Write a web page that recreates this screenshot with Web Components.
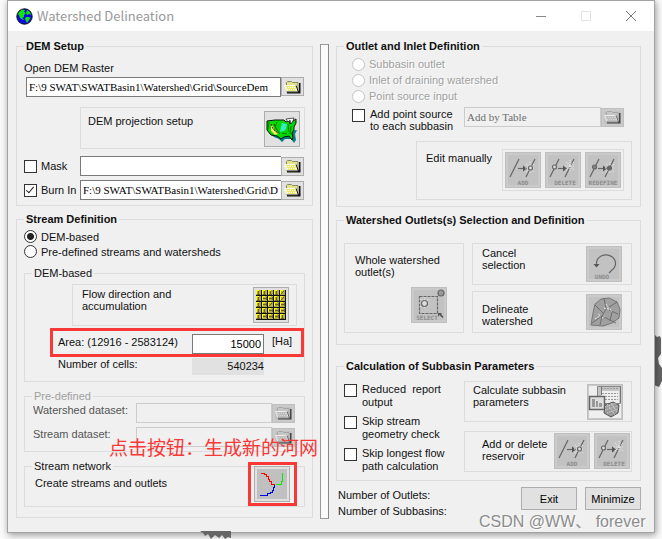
<!DOCTYPE html>
<html lang="en">
<head>
<meta charset="utf-8">
<title>Watershed Delineation</title>
<style>
  html { background: #f9faf9; }
  body { margin: 0; position: relative; font: 11px/12px "Liberation Sans", "Noto Sans CJK SC", sans-serif; color: #111; overflow: hidden; }
</style>
</head>
<body>
<watershed-app></watershed-app>

<script>
const define = (name, html, setup) => customElements.define(name, class extends HTMLElement {
  connectedCallback() {
    if (this.shadowRoot) return;
    const root = this.attachShadow({ mode: "open" });
    const t = document.createElement("template");
    t.innerHTML = typeof html === "function" ? html(this) : html;
    root.append(t.content.cloneNode(true));
    if (setup) setup(this, root);
  }
});

const channel = (body, label, x) => `<g fill="none" stroke="#666" stroke-width="1.2">${body}</g>
  <text x="${x}" y="33" font-family="DejaVu Sans Mono, monospace" font-weight="bold" font-size="6" fill="#8c8c8c" text-anchor="middle">${label}</text>`;
const sparkle = (x, y) => `<path stroke="#e4e4e4" stroke-dasharray="1 1" d="M${x - 4} ${y - 4}l8 8M${x - 4} ${y + 4}l8-8M${x} ${y - 6}v12M${x - 5} ${y}h10"/>`;
const arrow = `<path d="M13 16.5h7"/><path fill="#555" stroke="none" d="M18 13.500l4 3l-4 3z"/>`;

const ICONS = {
  folder: `<svg width="17" height="14" viewBox="0 0 17 14"><path fill="#111" d="M15 3h1.500v10.500H3V12h12z"/><path fill="var(--a)" stroke="var(--b)" d="M2.500 11.500v-9l1-1h4l1 1h5.500v9.500H2.500z"/><path fill="var(--c)" stroke="#fff" d="M.5 5.500h11l2 6H3z"/><path stroke="var(--d)" stroke-dasharray="1 1" d="M2 7.500h10M3 9.500h10"/><path stroke="var(--e)" fill="none" d="M12 5.500l2.500 6.500H3"/></svg>`,
  usa: `<svg width="32" height="28" viewBox="0 0 32 28"><path fill="#067f80" d="M3 18l5 4 5 2 3 3 3-3h6l3 4 2-3-1-6 2-4z"/><path fill="#00d900" stroke="#111" d="M1 6l8-1h9l2 2 3-1 1 3 3-3 3-2v4l-2 4v3l-2 3 1 5-1 2-3-4-5 1-3 2-4-3-6-1-4-5L1 14z"/><path fill="#39e8c8" d="M16 8l5 1-1 5-2 2-4 1 1-5z"/><path fill="#ffe26a" d="M5 10l2 1 1 4 4 4-3 1-4-4z"/><path fill="none" stroke="#7a1010" stroke-dasharray="2 1" d="M5 9l2 5 5 4M8 9l3 6"/><path fill="none" stroke="#0a7a0a" d="M3 7l-1 7M11 7l-2 5 5 7M22 9l1 8M25 11l-1 8M16 18l5 1"/><path fill="#fff" stroke="#111" stroke-width=".7" d="M20 4l2 3 2-2 1 4 2-3 1-3z"/></svg>`,
  flow: (() => {
    let s = `<svg width="30" height="30" viewBox="0 0 30 30" shape-rendering="crispEdges"><path fill="#b5ae48" d="M0 0h30v30H0z"/>`;
    for (let y = 0; y < 5; y++) for (let x = 0; x < 5; x++) {
      const X = x * 6, Y = y * 6, down = y === 0 || x === 0 || (x + y) % 4 === 0, diag = x === 4 && y < 2 || x === 2 && y === 2;
      s += `<path fill="#ff0" d="M${X} ${Y}h3v1h-2v3h-1z"/><path fill="none" stroke="#6b5f2a" d="${diag ? `M${X + 4} ${Y + 1}l-3 3` : down ? `M${X + 2.5} ${Y + 1}v4m-1.500-1h3` : `M${X + 1} ${Y + 2.5}h4m-1-1.500v3`}"/>`;
    }
    return s + `<path stroke="#111" d="M5.500 0v30M11.500 0v30M17.500 0v30M23.500 0v30M29.500 0v30M0 5.500h30M0 11.500h30M0 17.500h30M0 23.500h30M0 29.500h30"/></svg>`;
  })(),
  streams: `<svg width="30" height="30" viewBox="0 0 30 30"><path fill="#c0c0c0" d="M0 0h30v30H0z"/><g fill="none" stroke-width="1" shape-rendering="crispEdges"><path stroke="red" d="M4 4.500h3.500v1h2v2h2v3h1v2h2v3h3"/><path stroke="#0e0" d="M25.500 4v8h-1v3h-2v.5h-4"/><path stroke="#0000e0" d="M17.500 16v2h-1.500v3h-1v2h-2v1h-3v2.500H3"/></g></svg>`,
  add: `<svg width="36" height="36" viewBox="0 0 36 36">${channel(`<path d="M5 25L14 7M21 25l9-18"/>${arrow}${sparkle(25, 16)}<circle cx="25.500" cy="16" r="2" fill="#ddd"/>`, "ADD", 18)}</svg>`,
  delete: `<svg width="36" height="36" viewBox="0 0 36 36">${channel(`<path d="M5 25L14 7M20 25l9-18"/><circle cx="9.500" cy="15" r="2" fill="#ddd"/>${arrow}${sparkle(25, 14)}`, "DELETE", 20)}</svg>`,
  redefine: `<svg width="36" height="36" viewBox="0 0 36 36">${channel(`<path d="M5 25L14 7M20 25l9-18"/><circle cx="9.500" cy="15" r="2" fill="#888"/>${arrow}${sparkle(25, 16)}<circle cx="24.500" cy="16" r="2" fill="#666"/>`, "REDEFINE", 18)}</svg>`,
  select: `<svg width="36" height="36" viewBox="0 0 36 36">${channel(`<path stroke-dasharray="3 1" d="M8.500 9.500h18v17h-18z"/>${sparkle(13.5, 16)}<circle cx="13.500" cy="16.500" r="3" fill="#ddd"/><circle cx="30" cy="6" r="3" fill="#999"/><path fill="#555" stroke="none" d="M27 26h4l-1 1 2.500 3-1 1-3-3-1.500 1.500z"/>`, "SELECT", 16)}</svg>`,
  undo: `<svg width="36" height="36" viewBox="0 0 36 36">${channel(`<path d="M10.500 19v-2A9.500 8.500 0 1 1 26 24l-3 3"/><path fill="#555" stroke="none" d="M7.500 18h6l-3 3.500z"/>`, "UNDO", 16)}</svg>`,
  leaf: `<svg width="36" height="36" viewBox="0 0 36 36"><path fill="#a0a0a0" stroke="#777" d="M5 31l2-12 2-9 6-5 8-1 8 4 3 7-1 9-7 5-9 3z"/><path fill="none" stroke="#6e6e6e" d="M6 29l10-7 4-7-2-11M16 22l14 7M18 20l-9-9M20 15l11-7M23 16l9 4M16 22l-2 9M26 18l-2 9"/><path stroke="#eee" fill="none" stroke-dasharray="2 1" d="M9 25l5-3-2-3m4 5l3-2m-1-8l5 1-3-5m4 5l2 3"/></svg>`,
  report: `<svg width="36" height="34" viewBox="0 0 36 34"><path fill="#efefef" d="M2 1h32v32H2z"/><path fill="#c5c5c5" stroke="#888" d="M10.500 1.500h23v17h-23z"/><path fill="#eee" d="M14 6h18v12H14z"/><path stroke="#999" stroke-dasharray="2 1" d="M14 3.500h18M15 8.500h16M15 11.500h16M15 14.500h16"/><path stroke="#777" d="M33.500 1v17M14.500 1v9"/><path fill="#ddd" stroke="#666" stroke-width="1.500" d="M2.500 11.500h15v13h-15z"/><path fill="#999" d="M5 14h3v8H5zM9 16h2v6H9zM12 18h3v4h-3z"/><path fill="#999" stroke="#555" d="M18 20l8-3 6 3-1 8-7 4-7-4z"/><path fill="none" stroke="#ddd" stroke-dasharray="1 1" d="M18 22l12-4M18 25l13-4M20 28l11-4M20 19l8 11M24 18l6 9"/></svg>`,
  globe: `<svg width="17" height="17" viewBox="0 0 17 17"><circle cx="8.500" cy="8.500" r="7.700" fill="#0808e8" stroke="#111"/><path fill="#0ee60e" d="M3 4l3-2.500 3 .5-1 2 2 1-2 2v2l-2 1 2 1.500-1 .5-3-2-1-3-1-.500zM11 2l3 2 1 3-2-1-2 1-1-2zM10 9h3l1.500 1-1.500 2-2 3-1-2-1-2z"/></svg>`
};

define("tool-button", el => `
<style>
  :host { display: block; flex: none; }
  button { display: grid; place-items: center; width: 36px; height: 36px; margin: 0; padding: 0; border: 0; box-shadow: inset 0 0 0 1px #adadad; background: #e1e1e1; overflow: hidden; }
  button:disabled { box-shadow: inset 0 0 0 1px #bfbfbf, inset 0 0 0 3px #cacaca; background: #c2c2c2; }
  :host([icon=folder]) button { width: 23px; height: 19px; --a: #e6e28a; --b: #8a8a60; --c: #efeb6a; --d: #fff; --e: #111; }
  :host([icon=folder]) button:disabled { --a: #c8c8c8; --b: #999; --c: #bbb; --d: #ddd; --e: #444; }
  :host([icon=folder]) button:disabled svg { opacity: .7; }
  svg { display: block; }
</style>
<button type="button" aria-label="${el.getAttribute("label")}" ${el.hasAttribute("disabled") ? "disabled" : ""}>${ICONS[el.getAttribute("icon")]}</button>`);

define("group-box", `
<style>
  :host { display: block; }
  fieldset { box-sizing: border-box; min-width: 0; height: 100%; margin: 0; padding: 0 7px; border: 1px solid #dcdcdc; }
  legend { padding: 0 2px; height: 14px; line-height: 14px; font-weight: bold; }
  :host([sub]) legend { font-weight: normal; }
  :host([off]) legend { color: #a0a0a0; }
</style>
<fieldset><legend><slot name="legend"></slot></legend><slot></slot></fieldset>`);

define("action-panel", `
<style>
  :host { display: flex; box-sizing: border-box; border: 1px solid #dcdcdc; justify-content: space-between; align-items: flex-start; }
</style>
<slot></slot>`);

define("path-field", el => {
  const kind = el.getAttribute("kind"), a = n => el.getAttribute(n) || "";
  const off = el.hasAttribute("disabled") ? "disabled" : "";
  const text = `<label for="f">${a("label")}</label>`;
  return `
<style>
  :host { display: flex; align-items: center; height: 20px; }
  :host([kind=above]) { display: block; height: auto; }
  .row { display: flex; flex: 1; min-width: 0; height: 20px; align-items: center; padding-right: 1px; }
  :host([kind=above]) .row { padding-left: 2px; margin-top: 2px; }
  :host([kind=above]) tool-button { align-self: flex-start; }
  .name { display: flex; align-items: center; gap: 4px; width: var(--name, 56px); flex: none; white-space: nowrap; overflow: hidden; }
  :host([disabled]) .name { color: #555; padding-bottom: 6px; }
  :host([kind=above]) .name { width: auto; height: 14px; }
  .name input { appearance: none; box-sizing: border-box; width: 13px; height: 13px; margin: 0; border: 1px solid #333; background: #fff; flex: none; position: relative; }
  .name input:checked::after { content: ""; position: absolute; left: 3px; top: 0; width: 3px; height: 7px; border: solid #222; border-width: 0 1px 1px 0; rotate: 40deg; }
  .path { flex: 1; min-width: 0; width: 0; box-sizing: border-box; height: 20px; margin: 0; padding: 0 2px; border: 1px solid #7a7a7a; background: #fff; color: #000; font: 11px "Liberation Serif", serif; }
  .path:disabled { border: 1px solid #ccc; background: #f0f0f0; color: #6d6d6d; }
  :host([kind=check]) .path { border-right: 0; padding-right: 0; }
</style>
${kind === "above" ? `<div class="name">${text}</div>` : kind === "check" ? `<div class="name"><input type="checkbox" id="c" ${el.hasAttribute("checked") ? "checked" : ""}><label for="c">${a("label")}</label></div>` : kind === "bare" ? "" : `<div class="name">${text}</div>`}
<div class="row"><input class="path" id="f" type="text" aria-label="${a("label")}" value="${a("value")}" ${off}><tool-button icon="folder" label="Browse ${a("label")}" ${off}></tool-button></div>`;
});

define("radio-list", el => `
<style>
  :host { display: grid; grid-auto-rows: var(--step, 15px); }
  label { display: flex; align-items: center; gap: 4px; }
  input { appearance: none; box-sizing: border-box; width: 13px; height: 13px; margin: 0; border: 1px solid #333; border-radius: 50%; background: #fff; flex: none; }
  input:checked { background: radial-gradient(circle, #222 0 3px, #fff 4px); }
  input:disabled { border-color: #c4c4c4; }
  input:disabled + span { color: #a0a0a0; text-shadow: 1px 1px #fff; }
</style>
${el.getAttribute("options").split("|").map((o, i) => `<label><input type="radio" name="r" ${el.hasAttribute("disabled") ? "disabled" : i ? "" : "checked"}><span>${o}</span></label>`).join("")}`);

define("check-option", `
<style>
  :host { display: block; }
  label { display: flex; gap: 5px; }
  input { appearance: none; box-sizing: border-box; width: 13px; height: 13px; margin: 1px 0 0; border: 1px solid #333; background: #fff; flex: none; }
  input:checked { background: #333; }
  span { white-space: nowrap; }
</style>
<label><input type="checkbox"><span><slot></slot></span></label>`);

define("title-bar", `
<style>
  :host { display: flex; align-items: center; height: 30px; padding: 0 8px; background: #fff; }
  h1 { flex: 1; margin: 0 0 0 4px; font: 400 13px/20px "Noto Sans CJK SC", sans-serif; color: #999; }
  button { width: 45px; height: 28px; padding: 0; border: 0; background: none; display: grid; place-items: center; }
  button:last-child { width: 30px; margin-left: 8px; }
</style>
${ICONS.globe}<h1><slot></slot></h1>
<button type="button" aria-label="Minimize window"><svg width="12" height="12"><path stroke="#888" d="M1 6.500h10"/></svg></button>
<button type="button" aria-label="Maximize window" disabled><svg width="12" height="12"><path fill="none" stroke="#e2e2e2" d="M1.500 1.500h9v9h-9z"/></svg></button>
<button type="button" aria-label="Close window"><svg width="12" height="12"><path stroke="#777" d="M1 1l10 10M11 1L1 11"/></svg></button>`);

define("stream-panel", `
<style>
  :host { display: block; padding: 3px 0 10px; }
  .base { margin-top: 7px; }
  action-panel { height: 42px; margin: 4px 0 0 40px; padding: 2px 7px 0 9px; }
  .fields { position: relative; display: grid; grid-template-columns: 134px 72px 1fr; padding: 8px 0 6px 26px; row-gap: 4px; }
  .mark { position: absolute; left: 18px; right: -7px; top: 2px; height: 29px; box-sizing: border-box; border: 3px solid #f93838; pointer-events: none; }
  .fields > label { line-height: 17px; }
  .fields > .cells { line-height: 12px; }
  input, output { box-sizing: border-box; width: 100%; margin: 0; text-align: right; font: 11px "Liberation Sans", sans-serif; }
  input { height: 20px; border: 1px solid #7a7a7a; padding: 0 2px; background: #fff; }
  output { height: 17px; line-height: 17px; background: #e1e1e1; }
  .unit { padding: 1px 0 0 8px; }
  .flow { padding-top: 1px; }
  .pre { margin-top: 7px; }
  .pre path-field { --name: 103px; padding-left: 1px; padding-right: 1px; }
  .pre path-field + path-field { margin: 4px 0; }
  .net { margin-top: 7px; }
  .create { display: flex; justify-content: space-between; padding: 0 7px 4px 3px; }
  .create span { padding-top: 4px; }
  .hit { position: relative; margin-top: -7px; }
  .hit i { position: absolute; inset: -4px -7px -4px -6px; border: 3px solid #f93838; pointer-events: none; }
  .note { position: absolute; left: 101px; top: 434px; font: 19px/24px "Noto Sans CJK SC", sans-serif; color: #f93838; white-space: nowrap; }
</style>
<radio-list options="DEM-based|Pre-defined streams and watersheds"></radio-list>
<group-box sub class="base"><span slot="legend">DEM-based</span>
  <action-panel><span class="flow">Flow direction and<br>accumulation</span><tool-button icon="flow" label="Flow direction and accumulation"></tool-button></action-panel>
  <div class="fields">
    <label for="area">Area: (12916 - 2583124)</label><input id="area" type="text" value="15000"><span class="unit">[Ha]</span>
    <label for="cells" class="cells">Number of cells:</label><output id="cells">540234</output>
    <div class="mark"></div>
  </div>
</group-box>
<group-box sub off class="pre"><span slot="legend">Pre-defined</span>
  <path-field kind="left" label="Watershed dataset:" disabled></path-field>
  <path-field kind="left" label="Stream dataset:" disabled></path-field>
</group-box>
<group-box sub class="net"><span slot="legend">Stream network</span>
  <div class="create"><span>Create streams and outlets</span><div class="hit"><tool-button icon="streams" label="Create streams and outlets"></tool-button><i></i></div></div>
</group-box>
<div class="note">点击按钮：生成新的河网</div>`);

define("outlet-panel", `
<style>
  :host { display: block; padding: 3px 1px 6px 8px; }
  radio-list { --step: 16px; }
  .source { display: grid; grid-template-columns: 112px 1fr; padding-right: 7px; margin-top: 3px; }
  check-option { padding-top: 1px; }
  .edit { height: 59px; margin: 9px 0 0 64px; padding: 7px; }
  .edit > span { padding: 3px 0 0 2px; white-space: nowrap; }
  .tools { padding: 2px; gap: 4px; border: 1px solid #dcdcdc; display: flex; }
</style>
<radio-list disabled options="Subbasin outlet|Inlet of draining watershed|Point source input"></radio-list>
<div class="source"><check-option>Add point source<br>to each subbasin</check-option><path-field kind="bare" label="Point source table" value="Add by Table" disabled></path-field></div>
<action-panel class="edit"><span>Edit manually</span><div class="tools"><tool-button icon="add" label="Add" disabled></tool-button><tool-button icon="delete" label="Delete" disabled></tool-button><tool-button icon="redefine" label="Redefine" disabled></tool-button></div></action-panel>`);

define("selection-panel", `
<style>
  :host { display: grid; grid-template-columns: 3fr 4fr; grid-template-rows: 42px 42px; gap: 6px 8px; padding: 16px 1px 11px 0; }
  action-panel { padding: 2px 9px 0; }
  .whole { grid-row: 1 / 3; flex-direction: column; padding: 10px 16px 9px 10px; }
  .whole tool-button { align-self: flex-end; }
  .sel span { padding-top: 1px; } .del span { padding-top: 9px; }
</style>
<action-panel class="whole"><span>Whole watershed<br>outlet(s)</span><tool-button icon="select" label="Select whole watershed outlets" disabled></tool-button></action-panel>
<action-panel class="sel"><span>Cancel<br>selection</span><tool-button icon="undo" label="Undo" disabled></tool-button></action-panel>
<action-panel class="del"><span>Delineate<br>watershed</span><tool-button icon="leaf" label="Delineate watershed" disabled></tool-button></action-panel>`);

define("calc-panel", `
<style>
  :host { display: grid; grid-template-columns: 120px 1fr; padding: 8px 1px 1px 0; align-items: start; }
  .checks { display: grid; grid-auto-rows: 32px; line-height: 13px; padding-top: 2px; }
  .tasks { display: grid; gap: 9px; }
  action-panel { height: 41px; padding: 2px 8px 0; }
  .res { padding: 1px 1px 0 17px; }
  .res > span { padding-top: 5px; white-space: nowrap; }
  .pair { display: flex; gap: 4px; }
</style>
<div class="checks"><check-option>Reduced&nbsp; report<br>output</check-option><check-option>Skip stream<br>geometry check</check-option><check-option>Skip longest flow<br>path calculation</check-option></div>
<div class="tasks">
  <action-panel><span>Calculate subbasin<br>parameters</span><tool-button icon="report" label="Calculate subbasin parameters" disabled></tool-button></action-panel>
  <action-panel class="res"><span>Add or delete<br>reservoir</span><div class="pair"><tool-button icon="add" label="Add reservoir" disabled></tool-button><tool-button icon="delete" label="Delete reservoir" disabled></tool-button></div></action-panel>
</div>`);

define("watershed-app", `
<style>
  :host { display: block; position: relative; padding: 0 7px 7px; }
  .window { border: 1px solid #a3a3a3; background: #f0f0f0; position: relative; box-shadow: 1px 2px 7px #0006; }
  .map { position: absolute; fill: #666; }
  .map.right { right: 0; top: 334px; } .map.foot { left: 200px; top: 531px; }
  main { display: grid; grid-template-columns: 297fr 9px 305fr; column-gap: 7px; padding: 8px 13px 13px 8px; }
  .bar { border: 1px solid #999; border-right-color: #888; background: #fafafa; margin-top: 5px; }
  .dem { padding: 8px 0 5px; }
  .proj { height: 42px; margin: 10px 0 7px 56px; padding: 3px 4px 0 7px; }
  .proj span { padding-top: 4px; }
  .burn { margin-top: 4px; }
  .left, .right { min-width: 0; }
  .second { margin-top: 6px; } .third { margin-top: 14px; }
  footer { display: flex; gap: 8px; margin-top: 6px; padding-left: 2px; align-items: flex-start; }
  footer p { flex: 1; margin: 0; line-height: 16px; }
  footer button { width: 56px; height: 23px; padding: 0; border: 1px solid #adadad; background: #e1e1e1; font: 11px "Liberation Sans", sans-serif; }
  .credit { position: absolute; left: 479px; top: 512px; font: 16px/20px "Liberation Sans", "Noto Sans CJK SC", sans-serif; color: #8c8c8c; white-space: nowrap; text-shadow: 1px 1px #fff; }
</style>
<svg class="map right" width="8" height="54"><path d="M0 0l3 3 3-1 1 3v15l-3 4 1 6 3 4v13l-3 6-5-2z"/></svg>
<div class="window">
  <title-bar>Watershed Delineation</title-bar>
  <main>
    <div class="left">
      <group-box><span slot="legend">DEM Setup</span>
        <div class="dem">
          <path-field kind="above" label="Open DEM Raster" value="F:\\9 SWAT\\SWATBasin1\\Watershed\\Grid\\SourceDem"></path-field>
          <action-panel class="proj"><span>DEM projection setup</span><tool-button icon="usa" label="DEM projection setup"></tool-button></action-panel>
          <path-field kind="check" label="Mask"></path-field>
          <path-field class="burn" kind="check" checked label="Burn In" value="F:\\9 SWAT\\SWATBasin1\\Watershed\\Grid\\D"></path-field>
        </div>
      </group-box>
      <group-box class="second"><span slot="legend">Stream Definition</span><stream-panel></stream-panel></group-box>
    </div>
    <div class="bar"></div>
    <div class="right">
      <group-box><span slot="legend">Outlet and Inlet Definition</span><outlet-panel></outlet-panel></group-box>
      <group-box class="second"><span slot="legend">Watershed Outlets(s) Selection and Definition</span><selection-panel></selection-panel></group-box>
      <group-box class="third"><span slot="legend">Calculation of Subbasin Parameters</span><calc-panel></calc-panel></group-box>
      <footer><p>Number of Outlets:<br>Number of Subbasins:</p><button type="button">Exit</button><button type="button">Minimize</button></footer>
    </div>
  </main>
</div>
<svg class="map foot" width="31" height="8"><path d="M0 0h31v7l-3-1-3 2-3-4-3 3-4-3-4 4-3-5-3 2-2-3z"/></svg>
<div class="credit">CSDN @WW、 forever</div>`);
</script>
</body>
</html>
